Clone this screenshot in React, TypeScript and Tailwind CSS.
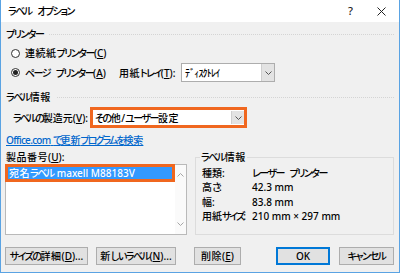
import React from 'react';

const font = "font-['Noto_Sans','Noto_Sans_CJK_JP',sans-serif] [font-feature-settings:'palt']";

// Meiryo UI has narrow kana and full-width kanji; approximate that run by run
function J({ t, tight }: { t: string; tight?: boolean }) {
  const runs: { kind: string; s: string }[] = [];
  for (const ch of t) {
    const kind = /[\u3040-\u30ff]/.test(ch)
      ? 'kana'
      : /[\uff65-\uff9f]/.test(ch)
        ? 'half'
        : /[\u4e00-\u9fff]/.test(ch)
          ? 'kanji'
          : 'latin';
    const last = runs[runs.length - 1];
    if (last && last.kind === kind) last.s += ch;
    else runs.push({ kind, s: ch });
  }
  return (
    <>
      {runs.map((r, i) => {
        const beforeSpace = runs[i + 1]?.s.startsWith(' ');
        let cls = '';
        if (r.kind === 'kana') {
          if (tight) cls = 'tracking-[-2px]';
          else cls = beforeSpace ? 'tracking-[-1.5px] mr-[3px]' : 'tracking-[-1.5px]';
        } else if (r.kind === 'half') cls = 'tracking-[-0.8px]';
        else if (r.kind === 'kanji') cls = tight ? 'tracking-[0px]' : 'tracking-[0.5px]';
        return (
          <span key={i} className={cls}>
            {r.s}
          </span>
        );
      })}
    </>
  );
}

function Chevron({ up = false, color = '#555' }: { up?: boolean; color?: string }) {
  return (
    <svg width="7" height="4" viewBox="0 0 7 4" className="block">
      <path
        d={up ? 'M0.5 3.5 L3.5 0.5 L6.5 3.5' : 'M0.5 0.5 L3.5 3.5 L6.5 0.5'}
        fill="none"
        stroke={color}
        strokeWidth="1"
      />
    </svg>
  );
}

function DropButton() {
  return (
    <div className="flex h-full w-[13px] items-center justify-center border-l border-[#cfcfcf] bg-[#e3e3e3]">
      <Chevron />
    </div>
  );
}

function GroupHeader({ label }: { label: string }) {
  return (
    <div className="flex h-[12px] items-center pl-px">
      <span className="leading-[12px]">
        <J t={label} />
      </span>
      <div className="ml-[6px] flex-1 border-t border-dotted border-[#d4d4d4]" />
    </div>
  );
}

function Radio({ checked }: { checked?: boolean }) {
  return (
    <span className="flex h-[9px] w-[9px] shrink-0 items-center justify-center rounded-full border border-[#333] bg-white">
      {checked && <span className="h-[5px] w-[5px] rounded-full bg-[#222]" />}
    </span>
  );
}

function Btn({ w, children, primary }: { w: string; children: React.ReactNode; primary?: boolean }) {
  return (
    <div
      className={`flex h-[18px] items-center justify-center border bg-[#e1e1e1] ${w} ${
        primary ? 'border-[#0078d7] shadow-[inset_0_0_0_1px_#0078d7]' : 'border-[#adadad]'
      }`}
    >
      {children}
    </div>
  );
}

export default function App() {
  const info = [
    ['種類:', 'レーザー プリンター'],
    ['高さ:', '42.3 mm'],
    ['幅:', '83.8 mm'],
    ['用紙サイズ:', '210 mm × 297 mm'],
  ];

  return (
    <div
      className={`flex h-[273px] w-[400px] flex-col whitespace-nowrap border-x border-b border-[#5aa3e3] bg-[#f0f0f0] text-[10px] font-medium leading-[12px] text-black ${font}`}
    >
      {/* title bar */}
      <div className="flex h-[22px] shrink-0 items-center bg-white pl-[7px]">
        <span>
          <J t="ラベル オプション" />
        </span>
        <span className="ml-auto mr-[24px] text-[11px] text-[#222]">?</span>
        <svg width="9" height="9" viewBox="0 0 9 9" className="mr-[13px]">
          <path d="M0.5 0.5 L8.5 8.5 M8.5 0.5 L0.5 8.5" stroke="#222" strokeWidth="1" />
        </svg>
      </div>

      <div className="flex flex-1 flex-col pl-[4px] pr-[5px] pt-[6px]">
        <GroupHeader label="プリンター" />

        <div className="mt-[7px] flex h-[12px] items-center pl-[6px]">
          <Radio />
          <span className="ml-[5px]">
            <J t="連続紙プリンター(" />
            <u>C</u>)
          </span>
        </div>

        <div className="mt-[4px] flex h-[19px] items-center">
          <div className="flex w-[114px] items-center pl-[6px]">
            <Radio checked />
            <span className="ml-[5px]">
              <J t="ページ プリンター(" />
              <u>A</u>)
            </span>
          </div>
          <span className="w-[62px]">
            <J t="用紙トレイ(" />
            <u>T</u>):
          </span>
          <div className="flex h-[19px] w-[94px] items-stretch border border-[#adadad] bg-white">
            <span className="flex flex-1 items-center pl-[3px]">
              <J t="ﾃﾞｨｽｸﾄﾚｲ" />
            </span>
            <DropButton />
          </div>
        </div>

        <div className="mt-[9px]">
          <GroupHeader label="ラベル情報" />
        </div>

        <div className="mt-[4px] flex h-[21px] items-center">
          <span className="w-[85px] shrink-0 pl-[8px]">
            <J t="ラベルの製造元(" tight />
            <u>V</u>):
          </span>
          <div className="flex h-[21px] w-[157px] items-stretch border-[3px] border-[#f0671f] bg-white">
            <span className="flex flex-1 items-center pl-[2px]">
              <J t="その他/ユーザー設定" />
            </span>
            <div className="my-px flex">
              <DropButton />
            </div>
          </div>
        </div>

        <div className="mt-[6px] pl-px">
          <span className="text-[#0066cc] underline">
            <span className="tracking-[-0.7px]">Office.com</span> <J t="で更新プログラムを検索" tight />
          </span>
        </div>

        <div className="mt-[5px] flex">
          <div className="flex w-[182px] flex-col">
            <span className="pl-px">
              <J t="製品番号(" />
              <u>U</u>):
            </span>
            <div className="mt-px flex h-[71px] border border-[#b9b9b9] bg-white">
              <div className="flex-1">
                <div className="-ml-px -mt-px flex h-[18px] items-center border-[3px] border-[#f0671f] bg-[#3399ff] pl-[1px] text-white">
                  <J t="宛名ラベル maxell M88183V" />
                </div>
              </div>
              <div className="flex w-[11px] flex-col items-center justify-between bg-[#fafafa] py-[8px]">
                <Chevron up color="#a6a6a6" />
                <Chevron color="#a6a6a6" />
              </div>
            </div>
          </div>

          <div className="ml-[8px] mt-[6px] flex h-[78px] flex-1 flex-col border border-[#dcdcdc]">
            <span className="-mt-[7px] ml-[4px] self-start bg-[#f0f0f0] px-px">
              <J t="ラベル情報" />
            </span>
            <div className="mt-[4px] flex flex-col gap-[2.3px] pl-[6px]">
              {info.map(([k, v]) => (
                <div key={k} className="flex h-[12px] items-center">
                  <span className="w-[50px]">
                    <J t={k} tight />
                  </span>
                  <span>
                    <J t={v} />
                  </span>
                </div>
              ))}
            </div>
          </div>
        </div>

        <div className="mt-[12px] flex items-center">
          <Btn w="w-[83px]">
            <J t="サイズの詳細(" />
            <u>D</u>)...
          </Btn>
          <div className="ml-[8px]">
            <Btn w="w-[80px]">
              <J t="新しいラベル(" />
              <u>N</u>)...
            </Btn>
          </div>
          <div className="ml-[18px]">
            <Btn w="w-[47px]">
              <J t="削除(" />
              <u>E</u>)
            </Btn>
          </div>
          <div className="ml-auto">
            <Btn w="w-[54px]" primary>
              OK
            </Btn>
          </div>
          <div className="ml-[9px]">
            <Btn w="w-[55px]">
              <J t="キャンセル" />
            </Btn>
          </div>
        </div>
      </div>
    </div>
  );
}
